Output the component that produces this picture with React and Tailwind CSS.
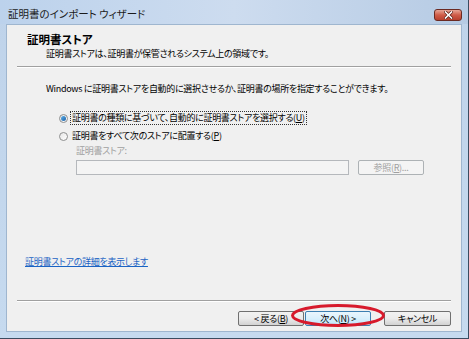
import React from 'react';

const jp = "font-['Noto_Sans_CJK_JP','Noto_Sans',sans-serif] [font-feature-settings:'palt']";
const body = 'text-[9px] tracking-[-0.3px]';

function Radio({ checked }) {
    return (
        <span className="w-[9px] h-[9px] rounded-full border border-[#8e8f8f] bg-gradient-to-br from-[#e6e6e6] to-[#ffffff] flex items-center justify-center shrink-0">
            {checked && <span className="w-[5px] h-[5px] rounded-full bg-gradient-to-br from-[#5fb2e8] to-[#1a5fa8]" />}
        </span>
    );
}

function Btn({ children, width, primary, disabled, className = '' }) {
    return (
        <div
            className={`h-[15px] flex items-center justify-center rounded-[2px] border ${body} leading-none ${width} ${className} ${
                disabled
                    ? 'border-[#adb2b5] bg-[#f4f4f4] text-[#a0a0a0]'
                    : primary
                    ? 'border-[#3c7fb1] bg-gradient-to-b from-[#eaf6fd] via-[#d9f0fc] to-[#bee6fd] text-black'
                    : 'border-[#707070] bg-gradient-to-b from-[#f2f2f2] via-[#ebebeb] to-[#d2d2d2] text-black'
            }`}
        >
            {children}
        </div>
    );
}

export default function App() {
    return (
        <div className={`relative w-[469px] h-[339px] overflow-hidden flex flex-col bg-gradient-to-b from-[#bfd3ea] to-[#c6daef] border-r border-b border-[#3b4c60] ${jp}`}>
            {/* タイトルバー */}
            <div className="h-[24px] flex items-start justify-between pl-[8px] pr-[6px] bg-gradient-to-r from-[#bcd2ec] via-[#cddcef] to-[#b6cbe4]">
                <span className="mt-[7px] text-[10.5px] leading-[14px] text-[#1b1b1b]">証明書のインポート ウィザード</span>
                <div className="mt-[9px] w-[28px] h-[12px] rounded-[3px] border border-[#6b2a22] bg-gradient-to-b from-[#e6a596] via-[#cf5c48] to-[#b8402e] flex items-center justify-center">
                    <svg width="9" height="8" viewBox="0 0 9 8">
                        <path d="M1.5 1 L7.5 7 M7.5 1 L1.5 7" stroke="#5a1d15" strokeWidth="3" strokeLinecap="square" />
                        <path d="M1.5 1 L7.5 7 M7.5 1 L1.5 7" stroke="#ffffff" strokeWidth="1.6" strokeLinecap="square" />
                    </svg>
                </div>
            </div>

            {/* クライアント領域 */}
            <div className="flex-1 ml-[6px] mr-[6px] mb-[6px] bg-[#f0f0f0] border border-[#9fb6cf] flex flex-col">
                <div className="h-[41px] pl-[20px] pt-[7px]">
                    <p className="text-[11.5px] leading-[14px] font-bold text-black">証明書ストア</p>
                    <p className={`pl-[19px] mt-[1px] ${body} leading-[14px] text-black`}>
                        証明書ストアは、証明書が保管されるシステム上の領域です。
                    </p>
                </div>
                <div className="mx-[10px] border-t border-[#a0a0a0] border-b border-b-white" />

                <p className={`mt-[14px] pl-[39px] ${body} leading-[14px] text-black`}>
                    Windows に証明書ストアを自動的に選択させるか、証明書の場所を指定することができます。
                </p>

                <div className="mt-[15px] pl-[52px] h-[14px] flex items-center gap-[3px]">
                    <Radio checked />
                    <span className={`${body} leading-[12px] text-black outline-1 outline-dotted outline-[#333] px-[1px]`}>
                        証明書の種類に基づいて、自動的に証明書ストアを選択する(<span className="underline">U</span>)
                    </span>
                </div>
                <div className="mt-[4px] pl-[52px] h-[14px] flex items-center gap-[3px]">
                    <Radio />
                    <span className={`${body} leading-[12px] text-black px-[1px]`}>
                        証明書をすべて次のストアに配置する(<span className="underline">P</span>)
                    </span>
                </div>
                <p className={`mt-[1px] pl-[69px] ${body} leading-[14px] text-[#a0a0a0]`}>証明書ストア:</p>
                <div className="mt-[2px] pl-[69px] flex items-center gap-[9px]">
                    <div className="w-[273px] h-[15px] border border-[#b5b8bc] bg-[#f4f4f4]" />
                    <Btn width="w-[66px]" disabled>
                        参照(<span className="underline">R</span>)...
                    </Btn>
                </div>

                <p className={`mt-[80px] pl-[18px] ${body} leading-[14px] text-[#1a63c4] underline`}>
                    証明書ストアの詳細を表示します
                </p>

                <div className="mt-[31px] mx-[10px] border-t border-[#a0a0a0] border-b border-b-white" />

                <div className="mt-[9px] pr-[10px] flex justify-end">
                    <Btn width="w-[66px]">
                        &lt; 戻る(<span className="underline">B</span>)
                    </Btn>
                    <Btn width="w-[66px]" primary className="ml-[1px]">
                        次へ(<span className="underline">N</span>) &gt;
                    </Btn>
                    <Btn width="w-[67px]" className="ml-[13px]">
                        キャンセル
                    </Btn>
                </div>
            </div>

            {/* 赤い丸印 */}
            <svg className="absolute left-0 top-0 pointer-events-none" width="469" height="339">
                <ellipse cx="338" cy="315.5" rx="45.5" ry="10" fill="none" stroke="#d71a2c" strokeWidth="3" />
            </svg>
        </div>
    );
}
